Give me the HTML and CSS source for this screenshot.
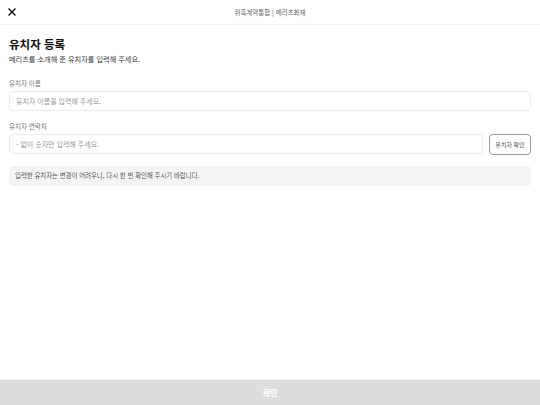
FILE: index.html
```html
<!DOCTYPE html>
<html lang="ko">
<head>
<meta charset="utf-8">
<link rel="stylesheet" href="styles.css">
</head>
<body>
<div class="page">
  <header class="topbar">
    <span class="close">
      <svg width="8" height="8" viewBox="0 0 8 8"><path d="M1 1L7 7M7 1L1 7" stroke="#111" stroke-width="1.4" stroke-linecap="square"/></svg>
    </span>
    <span class="toptitle">위촉계약통합 | 메리츠화재</span>
  </header>
  <main class="content">
    <h1 class="title">유치자 등록</h1>
    <p class="sub">메리츠를 소개해 준 유치자를 입력해 주세요.</p>
    <div class="field">
      <label class="label">유치자 이름</label>
      <div class="input">유치자 이름을 입력해 주세요.</div>
    </div>
    <div class="field">
      <label class="label">유치자 연락처</label>
      <div class="row">
        <div class="input grow">- 없이 숫자만 입력해 주세요.</div>
        <button class="check">유치자 확인</button>
      </div>
    </div>
    <div class="notice">입력한 유치자는 변경이 어려우니, 다시 한 번 확인해 주시기 바랍니다.</div>
  </main>
  <footer class="bottom">
    <button class="confirm">확인</button>
  </footer>
</div>
</body>
</html>
```
FILE: styles.css
```css
html, body {
  margin: 0;
  padding: 0;
  background: #fff;
}
body {
  font-family: "Noto Sans CJK KR", "Noto Sans", sans-serif;
  color: #222;
}
.page {
  width: 540px;
  height: 405px;
  display: flex;
  flex-direction: column;
}
.topbar {
  height: 24px;
  border-bottom: 1px solid #f2f2f2;
  display: flex;
  align-items: center;
  justify-content: center;
  position: relative;
}
.close {
  position: absolute;
  left: 8px;
  top: 8px;
  width: 8px;
  height: 8px;
  display: flex;
}
.toptitle {
  font-size: 6.5px;
  color: #666;
}
.content {
  flex: 1;
  padding: 11px 9px 0 9px;
}
.title {
  margin: 0;
  font-size: 11.5px;
  font-weight: 700;
  line-height: 17px;
  color: #111;
}
.sub {
  margin: 0;
  font-size: 7.2px;
  line-height: 12px;
  color: #3a3a3a;
}
.field {
  margin-top: 13px;
}
.field + .field {
  margin-top: 10px;
}
.label {
  display: block;
  font-size: 6.5px;
  color: #777;
  line-height: 10px;
  margin-bottom: 3px;
}
.input {
  height: 20px;
  box-sizing: border-box;
  border: 1px solid #ececec;
  border-radius: 4px;
  padding: 0 6px;
  display: flex;
  align-items: center;
  font-size: 7px;
  color: #999;
}
.row {
  display: flex;
  gap: 6px;
}
.grow {
  flex: 1;
}
.check {
  width: 42px;
  height: 21px;
  border: 1px solid #999;
  border-radius: 4px;
  background: #fff;
  font-family: inherit;
  font-size: 6px;
  color: #555;
  padding: 0;
  margin-top: -0.5px;
}
.notice {
  margin-top: 11px;
  background: #f4f4f4;
  border-radius: 4px;
  height: 20px;
  display: flex;
  align-items: center;
  padding: 0 6px;
  font-size: 6.4px;
  color: #555;
}
.bottom {
  border-top: 1px solid #f2f2f2;
}
.confirm {
  width: 100%;
  height: 25px;
  border: 0;
  background: #dddddd;
  color: #fff;
  font-family: inherit;
  font-size: 8px;
  font-weight: 700;
  padding: 0;
  display: block;
}
```
